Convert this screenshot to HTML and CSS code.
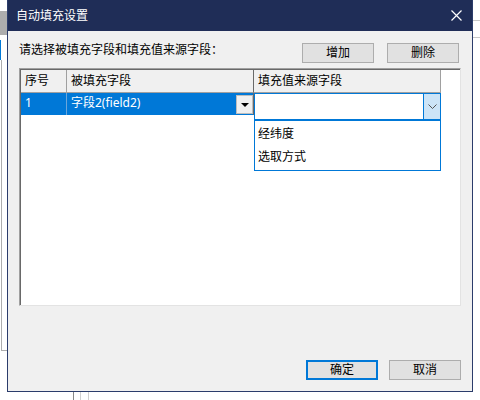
FILE: index.html
```html
<!DOCTYPE html>
<html lang="zh-CN">
<head>
    <meta charset="UTF-8">
    <title>自动填充设置</title>
    <link rel="stylesheet" href="styles.css">
</head>
<body>
    <div class="dialog">
        <div class="titlebar">
            <span class="title">自动填充设置</span>
            <svg class="close" width="11" height="11" viewBox="0 0 11 11">
                <path d="M0.5 0.5 L10.5 10.5 M10.5 0.5 L0.5 10.5" stroke="#fff" stroke-width="1.2"/>
            </svg>
        </div>
        <div class="content">
            <div class="top-row">
                <span class="label">请选择被填充字段和填充值来源字段：</span>
                <div class="actions">
                    <button class="btn">增加</button>
                    <button class="btn">删除</button>
                </div>
            </div>
            <div class="grid">
                <div class="row head">
                    <div class="cell c1">序号</div>
                    <div class="cell c2">被填充字段</div>
                    <div class="cell c3">填充值来源字段</div>
                </div>
                <div class="row selected">
                    <div class="cell c1">1</div>
                    <div class="cell c2">
                        字段2(field2)
                        <span class="drop-btn"><span class="tri"></span></span>
                    </div>
                    <div class="cell c3">
                        <div class="combo">
                            <div class="combo-edit"></div>
                            <div class="combo-btn">
                                <svg width="9" height="5" viewBox="0 0 9 5">
                                    <path d="M0.5 0.5 L4.5 4.5 L8.5 0.5" fill="none" stroke="#555" stroke-width="1"/>
                                </svg>
                            </div>
                        </div>
                        <ul class="combo-list">
                            <li>经纬度</li>
                            <li>选取方式</li>
                        </ul>
                    </div>
                </div>
            </div>
            <div class="footer">
                <button class="btn default">确定</button>
                <button class="btn">取消</button>
            </div>
        </div>
    </div>
</body>
</html>
```

FILE: styles.css
```css
* {
    box-sizing: border-box;
    margin: 0;
    padding: 0;
}

body {
    width: 480px;
    height: 400px;
    overflow: hidden;
    font-family: "Noto Sans", "Noto Sans CJK SC", sans-serif;
    font-size: 12px;
    color: #000;
    background:
        linear-gradient(#adadad, #adadad) 0 11px / 7px 24px no-repeat,
        linear-gradient(#0078d7, #0078d7) 0 40px / 1px 20px no-repeat,
        linear-gradient(#adadad, #adadad) 1px 60px / 1px 290px no-repeat,
        linear-gradient(#adadad, #adadad) 1px 350px / 6px 1px no-repeat,
        linear-gradient(#c8c8c8, #c8c8c8) 473px 20px / 7px 1px no-repeat,
        linear-gradient(#c8c8c8, #c8c8c8) 473px 37px / 7px 1px no-repeat,
        linear-gradient(#888, #888) 73px 392px / 1px 8px no-repeat,
        linear-gradient(#d0d0d0, #d0d0d0) 80px 392px / 1px 8px no-repeat,
        linear-gradient(#d0d0d0, #d0d0d0) 88px 392px / 1px 8px no-repeat,
        #fff;
}

.dialog {
    margin-left: 7px;
    width: 466px;
    height: 392px;
    border: 1px solid #2b3c6b;
    border-top: none;
    background: #f0f0f0;
    display: flex;
    flex-direction: column;
}

.titlebar {
    height: 31px;
    background: #1f2d57;
    color: #fff;
    display: flex;
    align-items: center;
    justify-content: space-between;
    padding: 0 10px 0 8px;
}

.title {
    font-size: 12px;
    line-height: 16px;
}

.content {
    flex: 1;
    display: flex;
    flex-direction: column;
    padding: 12px 11px 11px 11px;
}

.top-row {
    display: flex;
    justify-content: space-between;
    align-items: flex-start;
    height: 20px;
}

.label {
    line-height: 16px;
    margin-top: -1px;
}

.actions {
    display: flex;
    gap: 13px;
    padding-right: 2px;
}

.btn {
    width: 72px;
    height: 20px;
    background: #e1e1e1;
    border: 1px solid #adadad;
    font-family: inherit;
    font-size: 12px;
    line-height: 16px;
    color: #000;
}

.btn.default {
    border: 2px solid #0078d7;
}

.grid {
    margin-top: 5px;
    height: 238px;
    background: #fff;
    border: 1px solid;
    border-color: #a0a0a0 #e3e3e3 #e3e3e3 #a0a0a0;
    box-shadow: inset 1px 1px 0 #696969;
    padding: 1px 0 0 1px;
}

.row {
    display: flex;
}

.cell {
    position: relative;
    padding-left: 4px;
    border-right: 1px solid #a0a0a0;
    border-bottom: 1px solid #a0a0a0;
    white-space: nowrap;
}

.c1 { width: 46px; }
.c2 { width: 187px; }
.c3 { width: 187px; }

.head .cell {
    height: 23px;
    line-height: 22px;
    background: #f0f0f0;
}

.head .c2 {
    border-right: 1px solid #696969;
}

.selected .cell {
    height: 22px;
    line-height: 20px;
    border-bottom: none;
}

.selected .c1,
.selected .c2 {
    background: #0078d7;
    color: #fff;
    border-right-color: #6aa6db;
}

.selected .c2 {
    border-right: 1px solid #696969;
}

.drop-btn {
    position: absolute;
    right: 0;
    top: 2px;
    width: 17px;
    height: 19px;
    background: #f0f0f0;
    border: 1px solid #bdbdbd;
    display: flex;
    align-items: center;
    justify-content: center;
}

.tri {
    width: 0;
    height: 0;
    border-left: 4px solid transparent;
    border-right: 4px solid transparent;
    border-top: 4px solid #000;
}

.selected .c3 {
    padding: 0;
    border-right: none;
}

.combo {
    position: absolute;
    left: 0;
    top: 0;
    width: 187px;
    height: 27px;
    background: #fff;
    border: 1px solid #0078d7;
    display: flex;
}

.combo-edit {
    flex: 1;
}

.combo-btn {
    width: 17px;
    background: #cce4f7;
    border-left: 1px solid #0078d7;
    display: flex;
    align-items: center;
    justify-content: center;
}

.combo-list {
    position: absolute;
    left: 0;
    top: 27px;
    width: 187px;
    height: 51px;
    list-style: none;
    background: #fff;
    border: 1px solid #0078d7;
    padding-top: 1px;
}

.combo-list li {
    height: 23px;
    line-height: 23px;
    padding-left: 3px;
}

.footer {
    margin-top: auto;
    display: flex;
    justify-content: flex-end;
    gap: 11px;
}
```
